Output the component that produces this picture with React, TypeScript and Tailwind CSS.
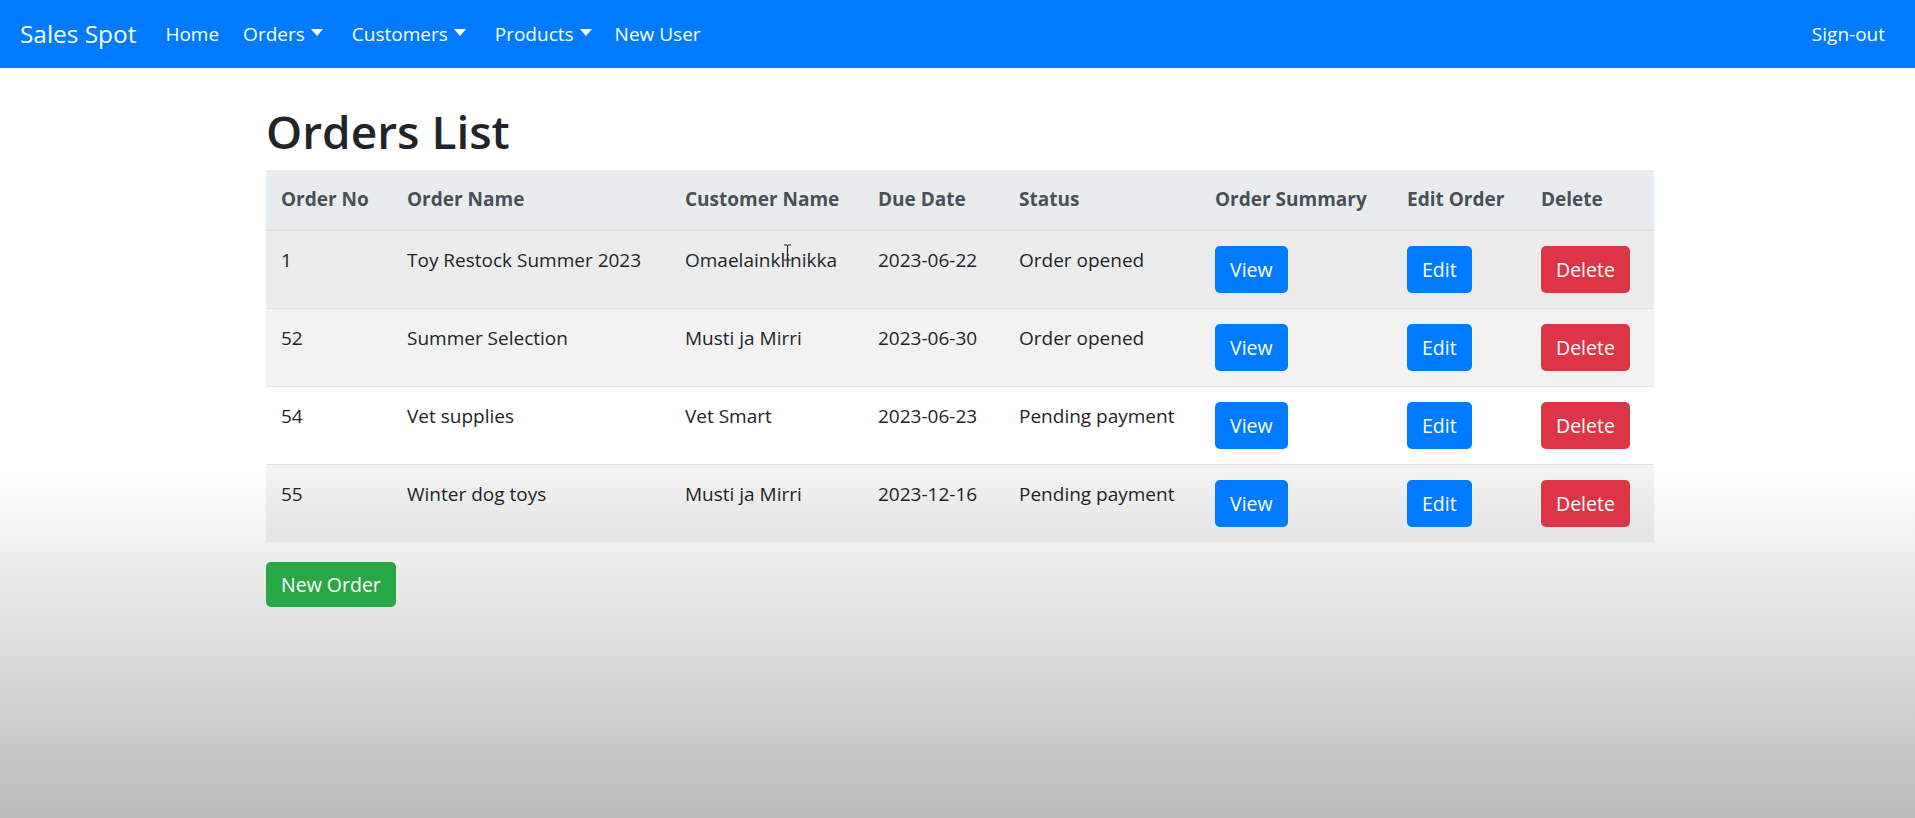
import React from 'react';

interface Order {
    id: number;
    name: string;
    customer: string;
    due: string;
    status: string;
}

const orders: Order[] = [
    { id: 1, name: 'Toy Restock Summer 2023', customer: 'Omaelainklinikka', due: '2023-06-22', status: 'Order opened' },
    { id: 52, name: 'Summer Selection', customer: 'Musti ja Mirri', due: '2023-06-30', status: 'Order opened' },
    { id: 54, name: 'Vet supplies', customer: 'Vet Smart', due: '2023-06-23', status: 'Pending payment' },
    { id: 55, name: 'Winter dog toys', customer: 'Musti ja Mirri', due: '2023-12-16', status: 'Pending payment' },
];

// row backgrounds: first row is hovered, then striped
const rowBg = ['bg-black/[0.075]', 'bg-black/5', '', 'bg-black/5'];

function Caret() {
    return (
        <span className="ml-[6px] inline-block align-[5px] border-x-[6px] border-t-[7px] border-x-transparent border-t-white" />
    );
}

function NavBar() {
    return (
        <nav className="flex h-[68px] items-center bg-[#007bff] px-[20px] text-[19px] text-white">
            <span className="mr-[18px] text-[24.4px]">Sales Spot</span>
            <a className="px-[11px]">Home</a>
            <a className="pl-[13px] pr-[16px]">Orders<Caret /></a>
            <a className="pl-[13px] pr-[16px]">Customers<Caret /></a>
            <a className="pl-[13px] pr-[13px]">Products<Caret /></a>
            <a className="px-[10px]">New User</a>
            <a className="ml-auto px-[10px]">Sign-out</a>
        </nav>
    );
}

export default function App() {
    const btn = 'h-[47px] rounded-[5px] px-[15px] text-[19.5px] text-white';
    const cell = 'px-[15px] py-[15px]';

    return (
        <div
            className="min-h-[818px] bg-[linear-gradient(180deg,#ffffff_470px,#bbbbbb_818px)] font-['Open_Sans','Noto_Sans',sans-serif] text-[#212529]"
        >
            <NavBar />

            <div className="mx-auto w-[1393px] pl-[5px] pt-[36px]">
                <h1 className="mb-[11px] text-[46px] font-semibold leading-[1.2]">Orders List</h1>

                <div className="relative">
                    <table className="w-full table-fixed border-collapse text-left text-[19px] leading-[29px]">
                        <colgroup>
                            <col className="w-[126px]" />
                            <col className="w-[278px]" />
                            <col className="w-[193px]" />
                            <col className="w-[141px]" />
                            <col className="w-[196px]" />
                            <col className="w-[192px]" />
                            <col className="w-[134px]" />
                            <col className="w-[128px]" />
                        </colgroup>
                        <thead>
                            <tr className="border-b-2 border-[#dee2e6] bg-[#e9ecef] font-bold text-[#495057]">
                                <th className={cell}>Order No</th>
                                <th className={cell}>Order Name</th>
                                <th className={cell}>Customer Name</th>
                                <th className={cell}>Due Date</th>
                                <th className={cell}>Status</th>
                                <th className={cell}>Order Summary</th>
                                <th className={cell}>Edit Order</th>
                                <th className={cell}>Delete</th>
                            </tr>
                        </thead>
                        <tbody>
                            {orders.map((o, i) => (
                                <tr key={o.id} className={`border-t border-[#dee2e6] align-top ${rowBg[i]}`}>
                                    <td className={cell}>{o.id}</td>
                                    <td className={cell}>{o.name}</td>
                                    <td className={cell}>{o.customer}</td>
                                    <td className={cell}>{o.due}</td>
                                    <td className={cell}>{o.status}</td>
                                    <td className={cell}>
                                        <button className={`${btn} bg-[#007bff]`}>View</button>
                                    </td>
                                    <td className={cell}>
                                        <button className={`${btn} bg-[#007bff]`}>Edit</button>
                                    </td>
                                    <td className={cell}>
                                        <button className={`${btn} bg-[#dc3545]`}>Delete</button>
                                    </td>
                                </tr>
                            ))}
                        </tbody>
                    </table>

                    {/* mouse cursor caught in the screenshot */}
                    <svg className="absolute left-[517px] top-[74px]" width="9" height="17" viewBox="0 0 9 17">
                        <path d="M1 1h3M5 1h3M4.5 1v15M1 16h3M5 16h3" stroke="#222" strokeWidth="1.2" fill="none" />
                    </svg>
                </div>

                <button className="mt-[20px] h-[45px] rounded-[5px] bg-[#28a745] px-[15px] text-[19.5px] text-white">
                    New Order
                </button>
            </div>
        </div>
    );
}
